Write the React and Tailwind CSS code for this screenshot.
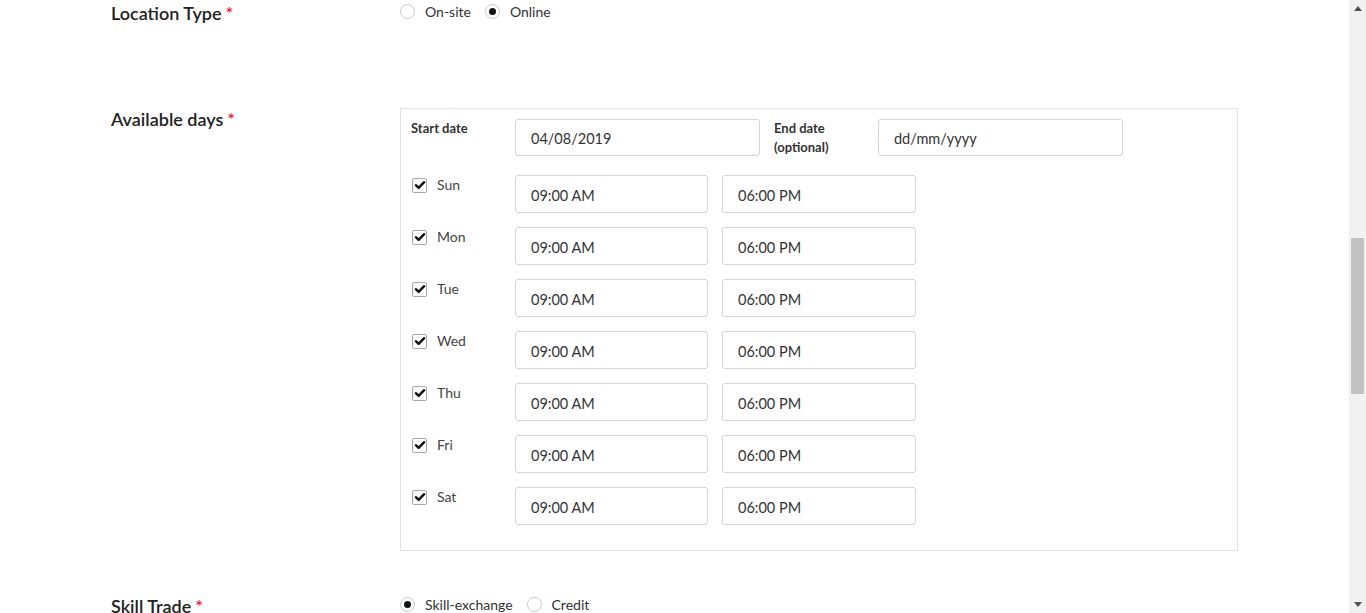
import { useState } from 'react'

const days = ['Sun', 'Mon', 'Tue', 'Wed', 'Thu', 'Fri', 'Sat']

function Radio({ checked }) {
  return (
    <span className="flex h-[15px] w-[15px] shrink-0 items-center justify-center rounded-full border border-[#c8c8c8] bg-white">
      {checked && <span className="h-[7px] w-[7px] rounded-full bg-[#111]" />}
    </span>
  )
}

function Check() {
  return (
    <span className="flex h-[15px] w-[15px] shrink-0 items-center justify-center rounded-[2px] border border-[#a8a8a8] bg-white">
      <svg viewBox="0 0 16 16" className="h-[12px] w-[12px]">
        <path d="M2.5 8.3 L6.2 11.8 L13.5 4.2" fill="none" stroke="#111" strokeWidth="3.2" strokeLinecap="round" strokeLinejoin="round" />
      </svg>
    </span>
  )
}

function Field({ value, w, h = 'h-[38px]' }) {
  return (
    <input
      readOnly
      value={value}
      className={`${h} ${w} rounded-[3px] border border-[#d4d4d4] bg-white px-[15px] pt-[2px] text-[14.5px] text-[#333] outline-none`}
    />
  )
}

function Label({ children }) {
  return (
    <div className="text-[18px] font-semibold leading-[26px] text-[#222]">
      {children}
      <span className="ml-1 text-[#e8203a]">*</span>
    </div>
  )
}

export default function App() {
  const [loc] = useState('online')
  const [trade] = useState('skill')

  return (
    <div className="flex h-[613px] w-full overflow-hidden bg-white font-['Lato','Noto_Sans',sans-serif]">
      <div className="flex-1 pl-[111px]">
        {/* Location type */}
        <div className="flex">
          <div className="w-[289px]">
            <Label>Location Type</Label>
          </div>
          <div className="flex items-center self-start pt-[4px] text-[14px] leading-[15px] text-[#333]">
            <Radio checked={loc === 'onsite'} />
            <span className="ml-[10px]">On-site</span>
            <span className="ml-[14px]"><Radio checked={loc === 'online'} /></span>
            <span className="ml-[10px]">Online</span>
          </div>
        </div>

        {/* Available days */}
        <div className="mt-[82px] flex">
          <div className="w-[289px] -mt-[2px]">
            <Label>Available days</Label>
          </div>
          <div className="w-[838px] border border-[#e2e2e2] px-[10px] pt-[10px] pb-[25px]">
            <div className="flex items-start">
              <div className="w-[104px] text-[13px] font-bold leading-[19px] text-[#333]">Start date</div>
              <Field value="04/08/2019" w="w-[245px]" h="h-[37px]" />
              <div className="ml-[14px] w-[104px] text-[13px] font-bold leading-[19px] text-[#333]">
                End date
                <br />
                (optional)
              </div>
              <Field value="dd/mm/yyyy" w="w-[245px]" h="h-[37px]" />
            </div>
            {days.map((d, i) => (
              <div key={d} className={`flex items-start ${i === 0 ? 'mt-[18px]' : 'mt-[14px]'}`}>
                <div className="flex w-[104px] items-center gap-[10px] pl-px pt-[2px] text-[14px] leading-[16px] text-[#444]">
                  <Check />
                  <span>{d}</span>
                </div>
                <Field value="09:00 AM" w="w-[193px]" />
                <div className="ml-[14px]">
                  <Field value="06:00 PM" w="w-[194px]" />
                </div>
              </div>
            ))}
          </div>
        </div>

        {/* Skill trade */}
        <div className="mt-[42px] flex">
          <div className="w-[289px]">
            <Label>Skill Trade</Label>
          </div>
          <div className="flex items-center self-start pt-[4px] text-[14px] leading-[15px] text-[#333]">
            <Radio checked={trade === 'skill'} />
            <span className="ml-[10px]">Skill-exchange</span>
            <span className="ml-[14px]"><Radio checked={trade === 'credit'} /></span>
            <span className="ml-[10px]">Credit</span>
          </div>
        </div>
      </div>

      {/* Scrollbar */}
      <div className="flex w-[17px] shrink-0 flex-col items-center bg-[#f1f1f1]">
        <div className="flex h-[17px] w-full items-center justify-center">
          <svg viewBox="0 0 8 5" className="h-[5px] w-[8px]"><path d="M0 5 L4 0 L8 5 Z" fill="#505050" /></svg>
        </div>
        <div className="mt-[221px] h-[156px] w-[13px] bg-[#c1c1c1]" />
        <div className="flex-1" />
        <div className="flex h-[17px] w-full items-center justify-center">
          <svg viewBox="0 0 8 5" className="h-[5px] w-[8px]"><path d="M0 0 L4 5 L8 0 Z" fill="#505050" /></svg>
        </div>
      </div>
    </div>
  )
}
